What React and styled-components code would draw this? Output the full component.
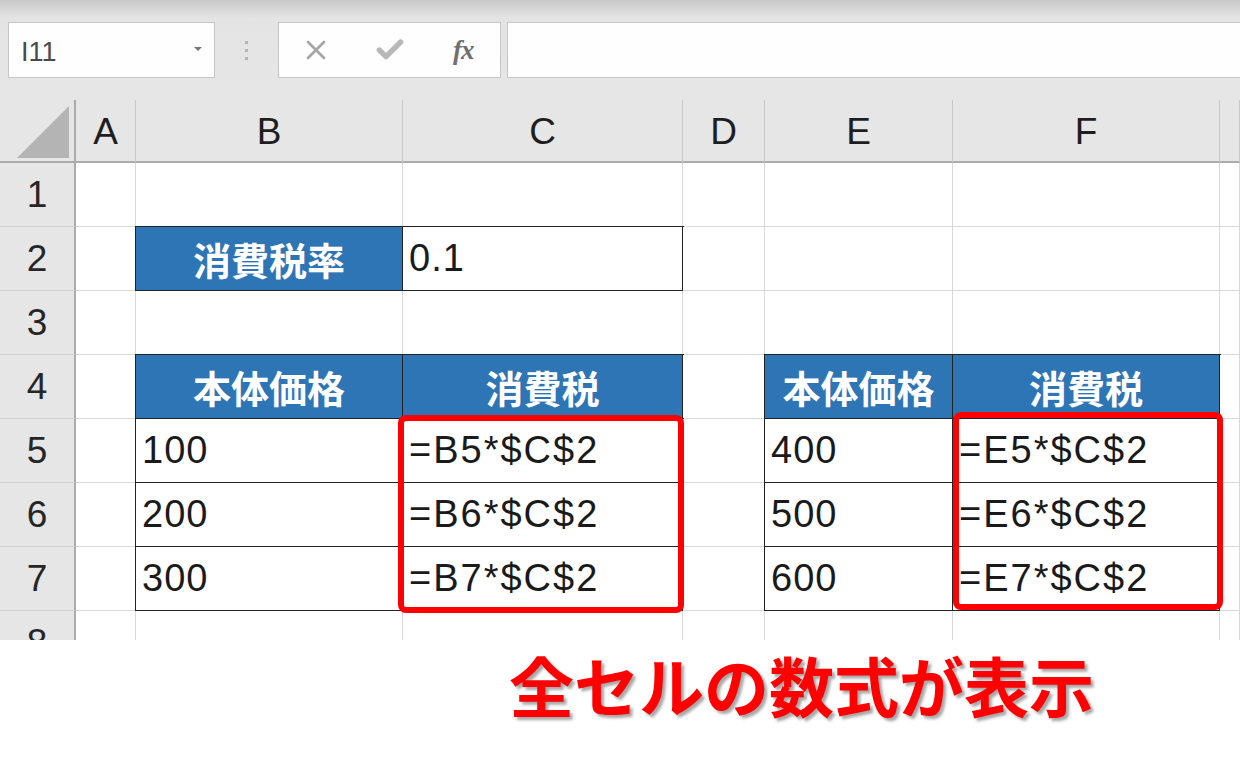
import React from "react";
import styled, { createGlobalStyle } from "styled-components";
import { X, Check } from "lucide-react";

const GlobalStyle = createGlobalStyle`
  body {
    margin: 0;
    background: #ffffff;
    font-family: "Liberation Sans", "Noto Sans CJK JP", sans-serif;
  }
`;

const COLS = [76, 60, 267, 280, 82, 188, 267, 20];
const LETTERS = ["A", "B", "C", "D", "E", "F", ""];

const Page = styled.div`
  width: 1240px;
  height: 774px;
  overflow: hidden;
  display: flex;
  flex-direction: column;
`;

const Toolbar = styled.div`
  height: 100px;
  box-sizing: border-box;
  padding: 22px 0 22px 8px;
  display: flex;
  background: linear-gradient(#c9c9c9 0px, #e4e4e4 18px, #e6e6e6 100%);
`;

const Box = styled.div`
  background: #fefefe;
  border: 1px solid #c6c6c6;
  box-sizing: border-box;
  display: flex;
  align-items: center;
`;

const NameBox = styled(Box)`
  width: 207px;
  padding: 4px 12px 0 12px;
  justify-content: space-between;
  font-size: 27px;
  color: #4a4a4a;
`;

const Caret = styled.span`
  width: 0;
  height: 0;
  margin-top: -6px;
  border-left: 4px solid transparent;
  border-right: 4px solid transparent;
  border-top: 4px solid #777;
`;

const Grip = styled.div`
  width: 63px;
  display: flex;
  flex-direction: column;
  align-items: center;
  justify-content: center;
  gap: 5px;

  span {
    width: 3px;
    height: 3px;
    background: #b4b4b4;
  }
`;

const FxButtons = styled(Box)`
  width: 223px;
`;

const FxSlot = styled.div`
  width: 74px;
  display: flex;
  justify-content: center;
  align-items: center;
  color: ${(p) => p.color || "#a6a6a6"};
`;

const FxText = styled.span`
  font-family: "Liberation Serif", serif;
  font-style: italic;
  font-weight: bold;
  font-size: 27px;
  color: #6f6f6f;
  letter-spacing: -1px;
`;

const FormulaInput = styled(Box)`
  flex: 1;
  margin-left: 6px;
  border-right: none;
`;

const Viewport = styled.div`
  height: 540px;
  overflow: hidden;
  flex-shrink: 0;
`;

const Grid = styled.div`
  position: relative;
  display: grid;
  grid-template-columns: ${COLS.map((c) => c + "px").join(" ")};
  grid-template-rows: 63px repeat(8, 64px);
`;

const HeadCell = styled.div`
  background: #e6e6e6;
  box-sizing: border-box;
  border-bottom: 2px solid #ababab;
  border-right: 1px solid #c8c8c8;
  display: flex;
  align-items: center;
  justify-content: center;
  font-size: 37px;
  color: #1e1e1e;
  padding-top: 2px;
`;

const Corner = styled(HeadCell)`
  border-right: 2px solid #ababab;
  align-items: flex-end;
  justify-content: flex-end;
  padding: 0 5px 3px 0;
`;

const RowHead = styled.div`
  background: #e6e6e6;
  box-sizing: border-box;
  border-right: 2px solid #ababab;
  border-bottom: 1px solid #cfcfcf;
  display: flex;
  align-items: center;
  justify-content: center;
  font-size: 37px;
  color: #262626;
`;

const Cell = styled.div`
  box-sizing: border-box;
  background: ${(p) => (p.$head ? "#2e75b6" : "#ffffff")};
  border-right: 1px solid ${(p) => (p.$boxed ? "#222222" : "#d9d9d9")};
  border-bottom: 1px solid ${(p) => (p.$boxed ? "#222222" : "#d9d9d9")};
  box-shadow: ${(p) => (p.$boxed ? "0 0 0 1px #222222" : "none")};
  display: flex;
  align-items: center;
  justify-content: ${(p) => (p.$head ? "center" : "flex-start")};
  padding-left: ${(p) => (p.$head ? "0" : "6px")};
  color: ${(p) => (p.$head ? "#ffffff" : "#1a1a1a")};
  font-family: ${(p) =>
    p.$head
      ? '"Noto Sans CJK JP", sans-serif'
      : '"Liberation Sans", "Noto Sans CJK JP", sans-serif'};
  font-weight: ${(p) => (p.$head ? "bold" : "normal")};
  font-size: 38px;
  letter-spacing: ${(p) => (p.$head ? "0" : p.$formula ? "2px" : "1px")};
  white-space: nowrap;
`;

// red frame laid over a block of cells (rows 5-7)
const Highlight = styled.div`
  position: absolute;
  grid-column: ${(p) => p.$col} / span 1;
  grid-row: 6 / span 3;
  top: ${(p) => p.$inset[0]}px;
  right: ${(p) => p.$inset[1]}px;
  bottom: ${(p) => p.$inset[2]}px;
  left: ${(p) => p.$inset[3]}px;
  border: 6px solid #ff0000;
  border-radius: 8px;
  pointer-events: none;
  z-index: 2;
`;

const Caption = styled.div`
  flex: 1;
  background: #ffffff;
  padding: 9px 0 0 509px;
  font-family: "Noto Sans CJK JP", sans-serif;
  font-weight: bold;
  font-size: 65px;
  line-height: 70px;
  color: #ff0000;
  text-shadow: 3px 3px 3px rgba(0, 0, 0, 0.35);
`;

// row -> { column letter: { text, head, boxed } }
const DATA = {
  2: {
    B: { text: "消費税率", head: true },
    C: { text: "0.1", boxed: true },
  },
  4: {
    B: { text: "本体価格", head: true },
    C: { text: "消費税", head: true },
    E: { text: "本体価格", head: true },
    F: { text: "消費税", head: true },
  },
  5: {
    B: { text: "100", boxed: true },
    C: { text: "=B5*$C$2", boxed: true },
    E: { text: "400", boxed: true },
    F: { text: "=E5*$C$2", boxed: true },
  },
  6: {
    B: { text: "200", boxed: true },
    C: { text: "=B6*$C$2", boxed: true },
    E: { text: "500", boxed: true },
    F: { text: "=E6*$C$2", boxed: true },
  },
  7: {
    B: { text: "300", boxed: true },
    C: { text: "=B7*$C$2", boxed: true },
    E: { text: "600", boxed: true },
    F: { text: "=E7*$C$2", boxed: true },
  },
};

const CornerTriangle = () => (
  <svg width="52" height="52" viewBox="0 0 52 52">
    <polygon points="52,0 52,52 0,52" fill="#b4b4b4" />
  </svg>
);

const App = () => {
  const rows = [1, 2, 3, 4, 5, 6, 7, 8];

  return (
    <Page>
      <GlobalStyle />
      <Toolbar>
        <NameBox>
          <span>I11</span>
          <Caret />
        </NameBox>
        <Grip>
          <span />
          <span />
          <span />
        </Grip>
        <FxButtons>
          <FxSlot>
            <X size={32} strokeWidth={2} />
          </FxSlot>
          <FxSlot color="#b8b8b8">
            <Check size={32} strokeWidth={4} />
          </FxSlot>
          <FxSlot>
            <FxText>fx</FxText>
          </FxSlot>
        </FxButtons>
        <FormulaInput />
      </Toolbar>

      <Viewport>
        <Grid>
          <Corner>
            <CornerTriangle />
          </Corner>
          {LETTERS.map((l, i) => (
            <HeadCell key={"h" + i}>{l}</HeadCell>
          ))}

          {rows.map((r) => (
            <React.Fragment key={r}>
              <RowHead>{r}</RowHead>
              {LETTERS.map((l, i) => {
                const d = (DATA[r] && DATA[r][l]) || {};
                return (
                  <Cell
                    key={r + "-" + i}
                    $head={d.head}
                    $boxed={d.head || d.boxed}
                    $formula={d.text && d.text.startsWith("=")}
                  >
                    {d.text}
                  </Cell>
                );
              })}
            </React.Fragment>
          ))}

          <Highlight $col={4} $inset={[-4, -1, -2, -5]} />
          <Highlight $col={7} $inset={[-7, -3, 1, 0]} />
        </Grid>
      </Viewport>

      <Caption>全セルの数式が表示</Caption>
    </Page>
  );
};

export default App;
